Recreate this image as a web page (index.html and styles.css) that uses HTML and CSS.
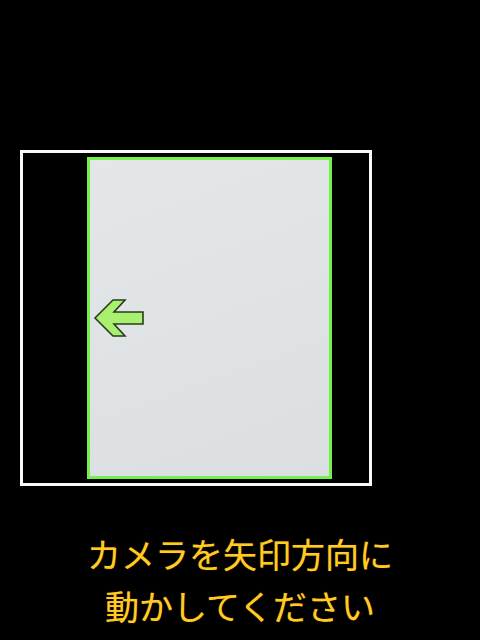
FILE: index.html
```html
<!DOCTYPE html>
<html lang="ja">
<head>
<meta charset="utf-8">
<link rel="stylesheet" href="styles.css">
</head>
<body>
<div class="screen">
  <div class="frame">
    <div class="panel">
      <svg class="arrow" width="52" height="40" viewBox="0 0 52 40">
        <polygon points="2,19 20,1 32,1 21,13 50,13 50,25 21,25 32,37 20,37" fill="#a8f070" stroke="#2c3a1c" stroke-width="1.6" stroke-linejoin="miter"/>
      </svg>
    </div>
  </div>
  <div class="message">
    <div>カメラを矢印方向に</div>
    <div>動かしてください</div>
  </div>
</div>
</body>
</html>
```
FILE: styles.css
```css
html, body {
  margin: 0;
  padding: 0;
  background: #000;
}
.screen {
  width: 480px;
  height: 640px;
  background: #000;
  padding-top: 150px;
  box-sizing: border-box;
  overflow: hidden;
}
.frame {
  margin-left: 20px;
  width: 282px;
  height: 326px;
  border: 3px solid #fbf8fc;
  padding-top: 4px;
  padding-left: 64px;
}
.panel {
  width: 236px;
  height: 316px;
  border: 3px solid #72f04c;
  background: linear-gradient(160deg, #e4e7e9 0%, #dcdfe1 100%);
  display: flex;
  align-items: center;
  padding-left: 3px;
}
.arrow {
  display: block;
  margin-top: 2px;
}
.message {
  margin-top: 42px;
  text-align: center;
  font-family: "Noto Sans CJK JP", sans-serif;
  font-size: 34px;
  font-weight: 400;
  line-height: 52px;
  color: #ffcc22;
  text-shadow: 0 0 1px #a06000;
}
```
